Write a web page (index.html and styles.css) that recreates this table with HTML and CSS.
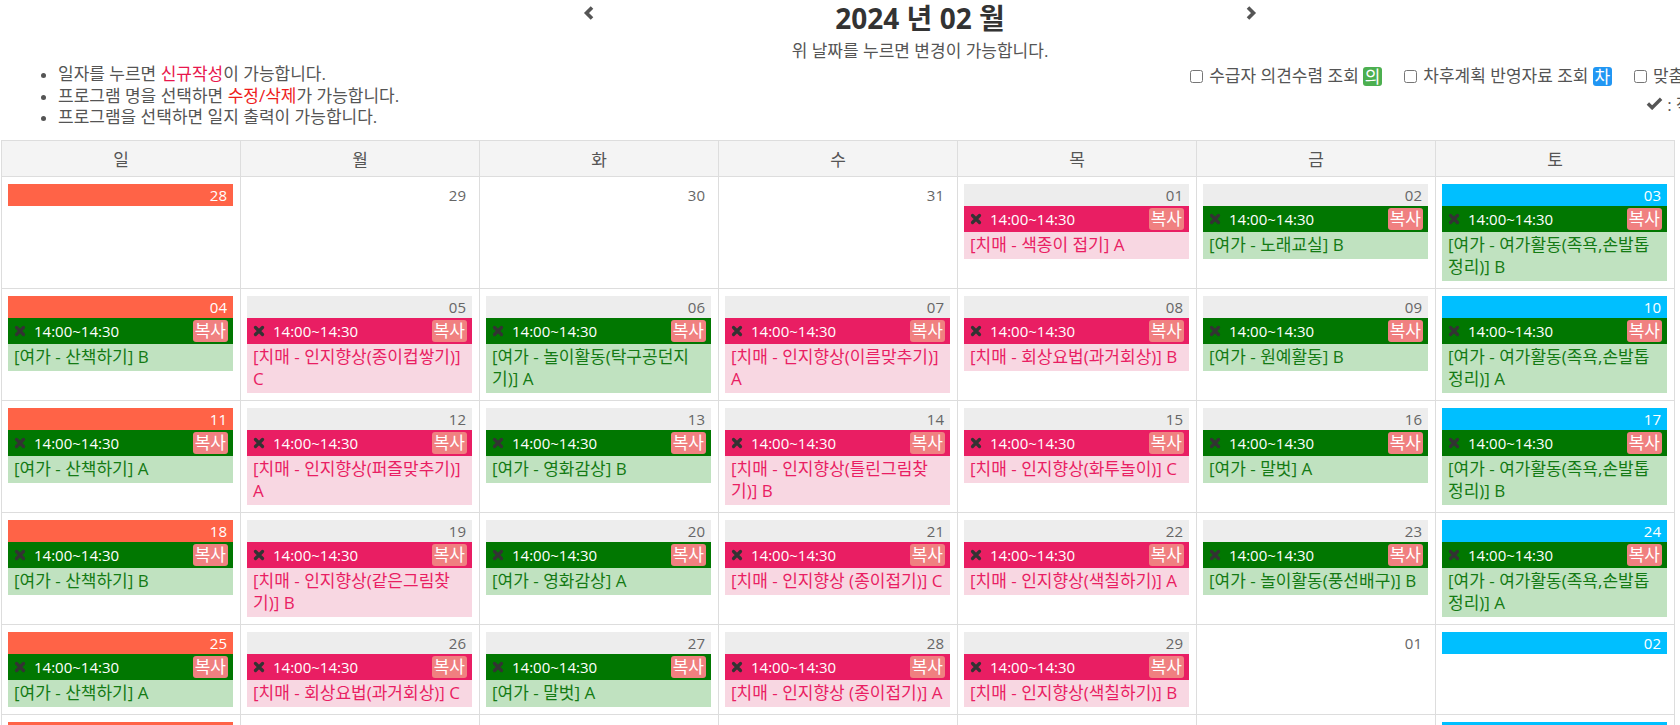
FILE: index.html
```html
<!DOCTYPE html>
<html lang="ko">
<head>
<meta charset="utf-8">
<title>2024 년 02 월</title>
<link rel="stylesheet" href="styles.css">
</head>
<body>
<div class="page">
  <div class="title-row">
    <a class="nav"><svg viewBox="0 0 12 16"><path d="M9 2.5L3.5 8L9 13.5"/></svg></a>
    <h1 class="title">2024 년 02 월</h1>
    <a class="nav"><svg viewBox="0 0 12 16"><path d="M3 2.5L8.5 8L3 13.5"/></svg></a>
  </div>
  <p class="subtitle">위 날짜를 누르면 변경이 가능합니다.</p>
  <div class="info-row">
    <ul class="help">
      <li>일자를 누르면 <span class="hl-a">신규작성</span>이 가능합니다.</li>
      <li>프로그램 명을 선택하면 <span class="hl-b">수정/삭제</span>가 가능합니다.</li>
      <li>프로그램을 선택하면 일지 출력이 가능합니다.</li>
    </ul>
    <div class="options">
      <div class="opt-line">
        <label class="opt"><input type="checkbox"> 수급자 의견수렴 조회 <span class="badge b-green">의</span></label>
        <label class="opt"><input type="checkbox"> 차후계획 반영자료 조회 <span class="badge b-blue">차</span></label>
        <label class="opt"><input type="checkbox"> 맞춤형 서비스 조회 <span class="badge b-orange">맞</span></label>
      </div>
      <div class="legend"><svg class="check" viewBox="0 0 18 14"><path d="M2 7.5L6.5 12L16 2.5"/></svg> : 작성이 완료된 일지</div>
    </div>
  </div>

  <table class="cal">
    <thead>
      <tr><th>일</th><th>월</th><th>화</th><th>수</th><th>목</th><th>금</th><th>토</th></tr>
    </thead>
    <tbody>
      <tr>
        <td><div class="date sun">28</div></td>
        <td><div class="date other">29</div></td>
        <td><div class="date other">30</div></td>
        <td><div class="date other">31</div></td>
        <td><div class="date">01</div>
          <div class="ev pink"><div class="ev-head"><svg class="x" viewBox="0 0 12 12"><path d="M2.5 2.5L9.5 9.5M9.5 2.5L2.5 9.5"/></svg><span class="time">14:00~14:30</span><span class="copy">복사</span></div><div class="ev-desc">[치매 - 색종이 접기] A</div></div></td>
        <td><div class="date">02</div>
          <div class="ev green"><div class="ev-head"><svg class="x" viewBox="0 0 12 12"><path d="M2.5 2.5L9.5 9.5M9.5 2.5L2.5 9.5"/></svg><span class="time">14:00~14:30</span><span class="copy">복사</span></div><div class="ev-desc">[여가 - 노래교실] B</div></div></td>
        <td><div class="date sat">03</div>
          <div class="ev green"><div class="ev-head"><svg class="x" viewBox="0 0 12 12"><path d="M2.5 2.5L9.5 9.5M9.5 2.5L2.5 9.5"/></svg><span class="time">14:00~14:30</span><span class="copy">복사</span></div><div class="ev-desc">[여가 - 여가활동(족욕,손발톱 정리)] B</div></div></td>
      </tr>
      <tr>
        <td><div class="date sun">04</div>
          <div class="ev green"><div class="ev-head"><svg class="x" viewBox="0 0 12 12"><path d="M2.5 2.5L9.5 9.5M9.5 2.5L2.5 9.5"/></svg><span class="time">14:00~14:30</span><span class="copy">복사</span></div><div class="ev-desc">[여가 - 산책하기] B</div></div></td>
        <td><div class="date">05</div>
          <div class="ev pink"><div class="ev-head"><svg class="x" viewBox="0 0 12 12"><path d="M2.5 2.5L9.5 9.5M9.5 2.5L2.5 9.5"/></svg><span class="time">14:00~14:30</span><span class="copy">복사</span></div><div class="ev-desc">[치매 - 인지향상(종이컵쌓기)] C</div></div></td>
        <td><div class="date">06</div>
          <div class="ev green"><div class="ev-head"><svg class="x" viewBox="0 0 12 12"><path d="M2.5 2.5L9.5 9.5M9.5 2.5L2.5 9.5"/></svg><span class="time">14:00~14:30</span><span class="copy">복사</span></div><div class="ev-desc">[여가 - 놀이활동(탁구공던지기)] A</div></div></td>
        <td><div class="date">07</div>
          <div class="ev pink"><div class="ev-head"><svg class="x" viewBox="0 0 12 12"><path d="M2.5 2.5L9.5 9.5M9.5 2.5L2.5 9.5"/></svg><span class="time">14:00~14:30</span><span class="copy">복사</span></div><div class="ev-desc">[치매 - 인지향상(이름맞추기)] A</div></div></td>
        <td><div class="date">08</div>
          <div class="ev pink"><div class="ev-head"><svg class="x" viewBox="0 0 12 12"><path d="M2.5 2.5L9.5 9.5M9.5 2.5L2.5 9.5"/></svg><span class="time">14:00~14:30</span><span class="copy">복사</span></div><div class="ev-desc">[치매 - 회상요법(과거회상)] B</div></div></td>
        <td><div class="date">09</div>
          <div class="ev green"><div class="ev-head"><svg class="x" viewBox="0 0 12 12"><path d="M2.5 2.5L9.5 9.5M9.5 2.5L2.5 9.5"/></svg><span class="time">14:00~14:30</span><span class="copy">복사</span></div><div class="ev-desc">[여가 - 원예활동] B</div></div></td>
        <td><div class="date sat">10</div>
          <div class="ev green"><div class="ev-head"><svg class="x" viewBox="0 0 12 12"><path d="M2.5 2.5L9.5 9.5M9.5 2.5L2.5 9.5"/></svg><span class="time">14:00~14:30</span><span class="copy">복사</span></div><div class="ev-desc">[여가 - 여가활동(족욕,손발톱 정리)] A</div></div></td>
      </tr>
      <tr>
        <td><div class="date sun">11</div>
          <div class="ev green"><div class="ev-head"><svg class="x" viewBox="0 0 12 12"><path d="M2.5 2.5L9.5 9.5M9.5 2.5L2.5 9.5"/></svg><span class="time">14:00~14:30</span><span class="copy">복사</span></div><div class="ev-desc">[여가 - 산책하기] A</div></div></td>
        <td><div class="date">12</div>
          <div class="ev pink"><div class="ev-head"><svg class="x" viewBox="0 0 12 12"><path d="M2.5 2.5L9.5 9.5M9.5 2.5L2.5 9.5"/></svg><span class="time">14:00~14:30</span><span class="copy">복사</span></div><div class="ev-desc">[치매 - 인지향상(퍼즐맞추기)] A</div></div></td>
        <td><div class="date">13</div>
          <div class="ev green"><div class="ev-head"><svg class="x" viewBox="0 0 12 12"><path d="M2.5 2.5L9.5 9.5M9.5 2.5L2.5 9.5"/></svg><span class="time">14:00~14:30</span><span class="copy">복사</span></div><div class="ev-desc">[여가 - 영화감상] B</div></div></td>
        <td><div class="date">14</div>
          <div class="ev pink"><div class="ev-head"><svg class="x" viewBox="0 0 12 12"><path d="M2.5 2.5L9.5 9.5M9.5 2.5L2.5 9.5"/></svg><span class="time">14:00~14:30</span><span class="copy">복사</span></div><div class="ev-desc">[치매 - 인지향상(틀린그림찾기)] B</div></div></td>
        <td><div class="date">15</div>
          <div class="ev pink"><div class="ev-head"><svg class="x" viewBox="0 0 12 12"><path d="M2.5 2.5L9.5 9.5M9.5 2.5L2.5 9.5"/></svg><span class="time">14:00~14:30</span><span class="copy">복사</span></div><div class="ev-desc">[치매 - 인지향상(화투놀이)] C</div></div></td>
        <td><div class="date">16</div>
          <div class="ev green"><div class="ev-head"><svg class="x" viewBox="0 0 12 12"><path d="M2.5 2.5L9.5 9.5M9.5 2.5L2.5 9.5"/></svg><span class="time">14:00~14:30</span><span class="copy">복사</span></div><div class="ev-desc">[여가 - 말벗] A</div></div></td>
        <td><div class="date sat">17</div>
          <div class="ev green"><div class="ev-head"><svg class="x" viewBox="0 0 12 12"><path d="M2.5 2.5L9.5 9.5M9.5 2.5L2.5 9.5"/></svg><span class="time">14:00~14:30</span><span class="copy">복사</span></div><div class="ev-desc">[여가 - 여가활동(족욕,손발톱 정리)] B</div></div></td>
      </tr>
      <tr>
        <td><div class="date sun">18</div>
          <div class="ev green"><div class="ev-head"><svg class="x" viewBox="0 0 12 12"><path d="M2.5 2.5L9.5 9.5M9.5 2.5L2.5 9.5"/></svg><span class="time">14:00~14:30</span><span class="copy">복사</span></div><div class="ev-desc">[여가 - 산책하기] B</div></div></td>
        <td><div class="date">19</div>
          <div class="ev pink"><div class="ev-head"><svg class="x" viewBox="0 0 12 12"><path d="M2.5 2.5L9.5 9.5M9.5 2.5L2.5 9.5"/></svg><span class="time">14:00~14:30</span><span class="copy">복사</span></div><div class="ev-desc">[치매 - 인지향상(같은그림찾기)] B</div></div></td>
        <td><div class="date">20</div>
          <div class="ev green"><div class="ev-head"><svg class="x" viewBox="0 0 12 12"><path d="M2.5 2.5L9.5 9.5M9.5 2.5L2.5 9.5"/></svg><span class="time">14:00~14:30</span><span class="copy">복사</span></div><div class="ev-desc">[여가 - 영화감상] A</div></div></td>
        <td><div class="date">21</div>
          <div class="ev pink"><div class="ev-head"><svg class="x" viewBox="0 0 12 12"><path d="M2.5 2.5L9.5 9.5M9.5 2.5L2.5 9.5"/></svg><span class="time">14:00~14:30</span><span class="copy">복사</span></div><div class="ev-desc">[치매 - 인지향상 (종이접기)] C</div></div></td>
        <td><div class="date">22</div>
          <div class="ev pink"><div class="ev-head"><svg class="x" viewBox="0 0 12 12"><path d="M2.5 2.5L9.5 9.5M9.5 2.5L2.5 9.5"/></svg><span class="time">14:00~14:30</span><span class="copy">복사</span></div><div class="ev-desc">[치매 - 인지향상(색칠하기)] A</div></div></td>
        <td><div class="date">23</div>
          <div class="ev green"><div class="ev-head"><svg class="x" viewBox="0 0 12 12"><path d="M2.5 2.5L9.5 9.5M9.5 2.5L2.5 9.5"/></svg><span class="time">14:00~14:30</span><span class="copy">복사</span></div><div class="ev-desc">[여가 - 놀이활동(풍선배구)] B</div></div></td>
        <td><div class="date sat">24</div>
          <div class="ev green"><div class="ev-head"><svg class="x" viewBox="0 0 12 12"><path d="M2.5 2.5L9.5 9.5M9.5 2.5L2.5 9.5"/></svg><span class="time">14:00~14:30</span><span class="copy">복사</span></div><div class="ev-desc">[여가 - 여가활동(족욕,손발톱 정리)] A</div></div></td>
      </tr>
      <tr>
        <td><div class="date sun">25</div>
          <div class="ev green"><div class="ev-head"><svg class="x" viewBox="0 0 12 12"><path d="M2.5 2.5L9.5 9.5M9.5 2.5L2.5 9.5"/></svg><span class="time">14:00~14:30</span><span class="copy">복사</span></div><div class="ev-desc">[여가 - 산책하기] A</div></div></td>
        <td><div class="date">26</div>
          <div class="ev pink"><div class="ev-head"><svg class="x" viewBox="0 0 12 12"><path d="M2.5 2.5L9.5 9.5M9.5 2.5L2.5 9.5"/></svg><span class="time">14:00~14:30</span><span class="copy">복사</span></div><div class="ev-desc">[치매 - 회상요법(과거회상)] C</div></div></td>
        <td><div class="date">27</div>
          <div class="ev green"><div class="ev-head"><svg class="x" viewBox="0 0 12 12"><path d="M2.5 2.5L9.5 9.5M9.5 2.5L2.5 9.5"/></svg><span class="time">14:00~14:30</span><span class="copy">복사</span></div><div class="ev-desc">[여가 - 말벗] A</div></div></td>
        <td><div class="date">28</div>
          <div class="ev pink"><div class="ev-head"><svg class="x" viewBox="0 0 12 12"><path d="M2.5 2.5L9.5 9.5M9.5 2.5L2.5 9.5"/></svg><span class="time">14:00~14:30</span><span class="copy">복사</span></div><div class="ev-desc">[치매 - 인지향상 (종이접기)] A</div></div></td>
        <td><div class="date">29</div>
          <div class="ev pink"><div class="ev-head"><svg class="x" viewBox="0 0 12 12"><path d="M2.5 2.5L9.5 9.5M9.5 2.5L2.5 9.5"/></svg><span class="time">14:00~14:30</span><span class="copy">복사</span></div><div class="ev-desc">[치매 - 인지향상(색칠하기)] B</div></div></td>
        <td><div class="date other">01</div></td>
        <td><div class="date sat">02</div></td>
      </tr>
      <tr>
        <td><div class="date sun">03</div></td>
        <td><div class="date other">04</div></td>
        <td><div class="date other">05</div></td>
        <td><div class="date other">06</div></td>
        <td><div class="date other">07</div></td>
        <td><div class="date other">08</div></td>
        <td><div class="date sat">09</div></td>
      </tr>
    </tbody>
  </table>
</div>
</body>
</html>
```

FILE: styles.css
```css
html {
  overflow: hidden;
}

body {
  margin: 0;
  font-family: "Open Sans", "Noto Sans CJK KR", sans-serif;
  font-size: 17px;
  color: #555;
  background: #fff;
}

.page {
  width: 1840px;
}

.title-row {
  display: flex;
  justify-content: center;
  align-items: flex-start;
  height: 36px;
}

.nav {
  display: block;
  width: 12px;
  height: 16px;
  margin-top: 5px;
  cursor: pointer;
}

.nav svg {
  display: block;
  width: 12px;
  height: 16px;
  fill: none;
  stroke: #555;
  stroke-width: 3.6;
  stroke-linejoin: miter;
}

.title {
  width: 650px;
  margin: 0;
  font-size: 28px;
  line-height: 36px;
  font-weight: 700;
  color: #333;
  text-align: center;
}

.subtitle {
  margin: 4px 0 0;
  width: 1840px;
  text-align: center;
  line-height: 22px;
}

.info-row {
  display: flex;
  justify-content: space-between;
  align-items: flex-start;
}

.help {
  margin: 1px 0 0;
  padding-left: 58px;
  line-height: 21.5px;
}

.help li::marker {
  font-size: 15px;
}

.hl-a {
  color: #e8174d;
}

.hl-b {
  color: #ee1c1c;
}

.options {
  display: flex;
  flex-direction: column;
  align-items: flex-end;
  padding-right: 30px;
}

.opt-line {
  display: flex;
  height: 28px;
  align-items: center;
  gap: 22px;
}

.opt {
  display: flex;
  align-items: center;
  white-space: pre;
  line-height: 26px;
}

.opt input {
  margin: 0 2px 0 0;
  width: 13px;
  height: 13px;
}

.badge {
  display: inline-block;
  height: 19px;
  line-height: 19px;
  padding: 0 1.5px;
  border-radius: 3px;
  color: #fff;
}

.b-green {
  background: #4caf50;
}

.b-blue {
  background: #2196f3;
}

.b-orange {
  background: #ff9800;
}

.legend {
  display: flex;
  align-items: center;
  height: 26px;
  white-space: pre;
}

.check {
  width: 17px;
  height: 14px;
  fill: none;
  stroke: #555;
  stroke-width: 3.6;
}

.cal {
  margin: 12px 0 0 1px;
  width: 1674px;
  table-layout: fixed;
  border-collapse: separate;
  border-spacing: 0;
  border-top: 1px solid #ddd;
  border-left: 1px solid #ddd;
}

.cal th {
  height: 35px;
  padding: 0;
  background: #f4f4f4;
  font-weight: 400;
  color: #555;
  border-right: 1px solid #ddd;
  border-bottom: 1px solid #ddd;
  text-align: center;
  vertical-align: middle;
}

.cal td {
  padding: 7px 7px 7px 6px;
  vertical-align: top;
  border-right: 1px solid #ddd;
  border-bottom: 1px solid #ddd;
}

.date {
  height: 22px;
  line-height: 22px;
  padding-right: 6px;
  text-align: right;
  font-size: 15px;
  background: #ededed;
  color: #666;
}

.date.other {
  background: transparent;
}

.date.sun {
  background: #ff6347;
  color: #fff;
}

.date.sat {
  background: #00bfff;
  color: #fff;
}

.ev-head {
  display: flex;
  align-items: center;
  height: 26px;
  padding: 0 5px 0 6px;
  color: #fff;
}

.x {
  width: 12px;
  height: 12px;
  margin-right: 8px;
  fill: none;
  stroke: #333;
  stroke-width: 3.2;
  stroke-linecap: round;
}

.time {
  font-size: 15px;
  line-height: 26px;
}

.copy {
  margin-left: auto;
  height: 22px;
  line-height: 22px;
  padding: 0 2px;
  border-radius: 3px;
  background: #f08080;
  color: #fff;
}

.ev-desc {
  padding: 2px 4px 3px 6px;
  line-height: 22px;
}

.pink .ev-head {
  background: #e91e63;
}

.pink .ev-desc {
  background: #f8d7e2;
  color: #e91e63;
}

.green .ev-head {
  background: #017701;
}

.green .ev-desc {
  background: #c0e2c0;
  color: #147a14;
}
```
